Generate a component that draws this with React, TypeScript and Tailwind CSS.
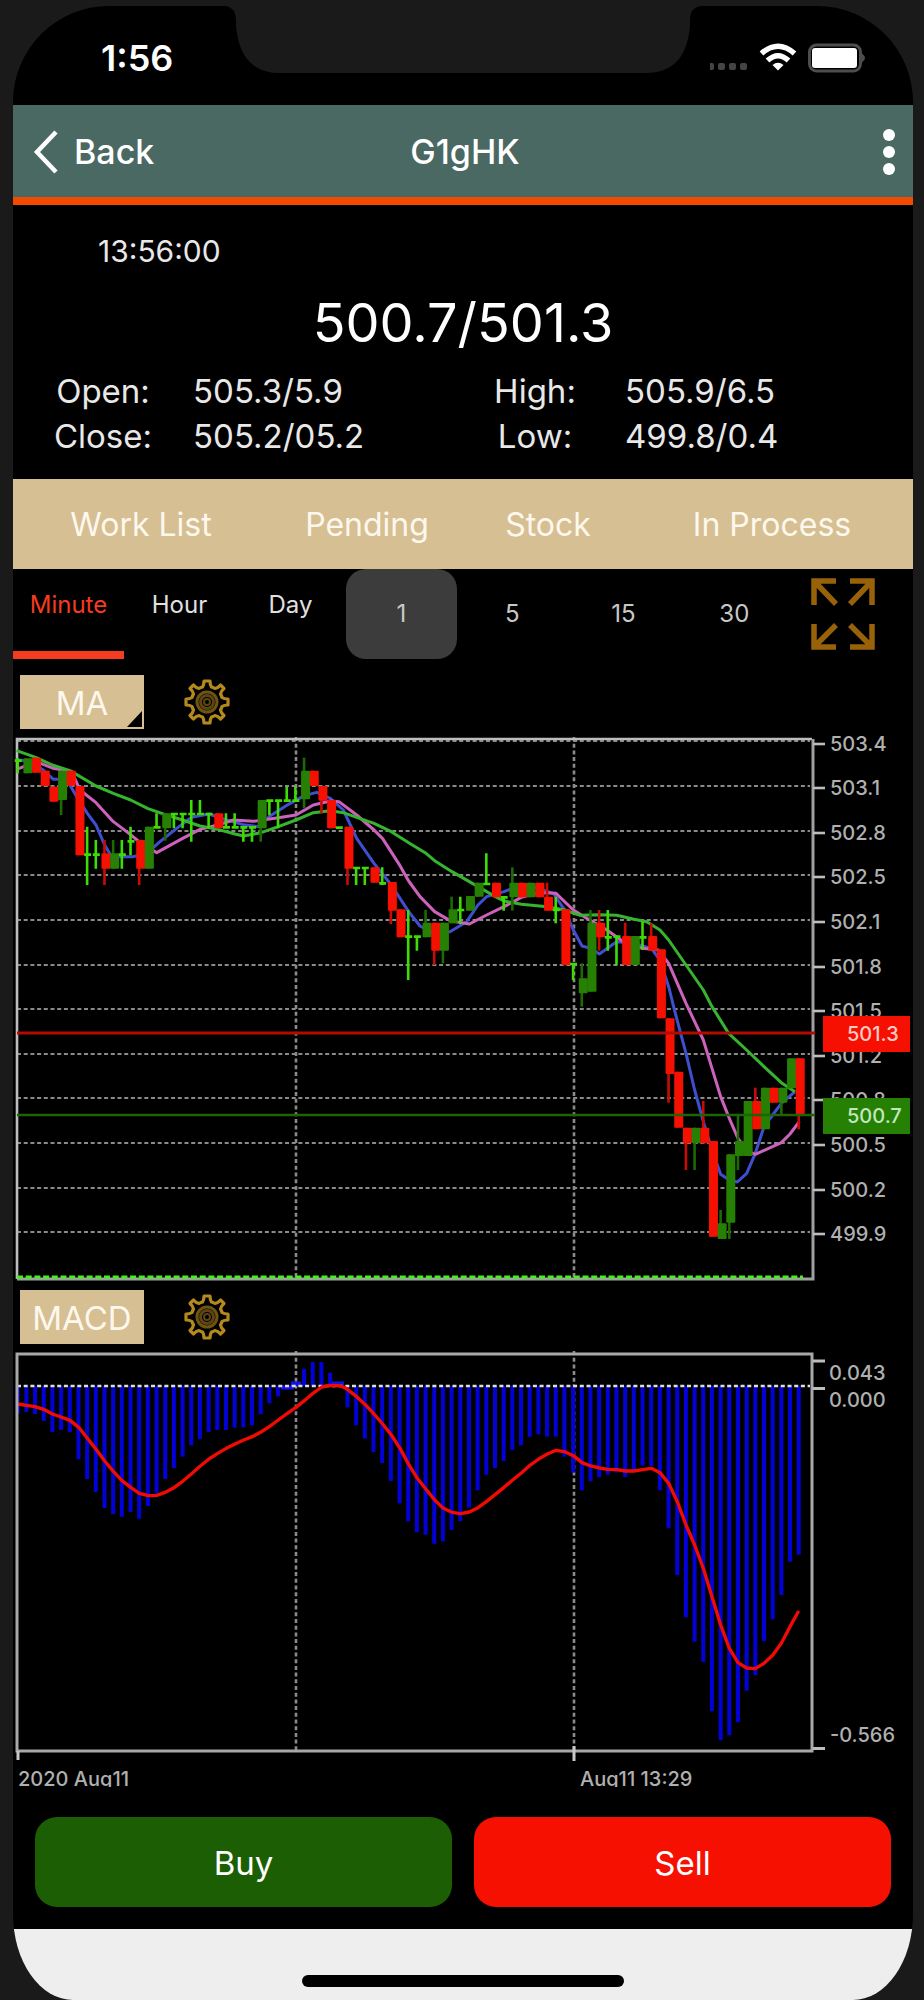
import { useState } from 'react';

type Kind = 'up' | 'down' | 'flat';

interface Candle {
  kind: Kind;
  high: number;
  top: number;
  bottom: number;
  low: number;
}

const up = (high: number, top: number, bottom: number, low = bottom): Candle => ({ kind: 'up', high, top, bottom, low });
const down = (high: number, top: number, bottom: number, low = bottom): Candle => ({ kind: 'down', high, top, bottom, low });
const flat = (high: number, low: number, price: number): Candle => ({ kind: 'flat', high, top: price, bottom: price, low });

// one entry per minute, in thirds of a pixel below the top of the plot
const candles: Candle[] = [
  flat(85, 130, 92), up(85, 85, 130), down(83, 83, 128), down(122, 122, 168), down(170, 170, 215),
  up(122, 122, 210, 255), down(122, 122, 167), down(168, 168, 376), flat(290, 465, 374), flat(330, 416, 374),
  down(330, 370, 416, 465), up(330, 370, 416), flat(330, 416, 374), flat(290, 376, 334), down(330, 330, 416, 465),
  up(290, 290, 416), flat(250, 295, 292), up(250, 250, 295, 332), flat(250, 295, 252), flat(250, 295, 252),
  flat(210, 335, 252), flat(210, 252, 252), flat(250, 295, 252), down(250, 250, 295), flat(250, 295, 292),
  flat(250, 295, 292), flat(290, 335, 292), flat(290, 335, 292), up(210, 210, 295, 335), flat(210, 256, 212),
  flat(210, 295, 212), flat(170, 212, 212), flat(170, 212, 212), up(83, 122, 208, 235), down(122, 122, 168),
  down(168, 168, 212, 250), down(210, 210, 295), flat(290, 296, 293), down(290, 290, 416, 465), flat(412, 465, 414),
  flat(412, 465, 414), down(412, 412, 458), flat(412, 465, 460), down(456, 456, 542, 582), down(538, 538, 622),
  flat(540, 750, 620), flat(620, 662, 620), up(540, 578, 622), down(578, 578, 662, 705), up(578, 578, 662, 700),
  up(500, 538, 580), flat(500, 582, 540), up(498, 498, 542), up(458, 458, 500), flat(370, 462, 462),
  down(458, 458, 502), flat(500, 542, 502), up(412, 458, 502, 542), down(458, 458, 502), up(458, 458, 502),
  down(458, 458, 502), down(458, 500, 542), flat(500, 580, 540), down(538, 538, 705), flat(700, 750, 702),
  up(700, 745, 790, 830), up(540, 578, 785), down(540, 578, 622, 662), flat(540, 662, 622), flat(620, 705, 620),
  down(578, 618, 705), up(618, 618, 705), flat(575, 660, 622), down(580, 618, 662), down(658, 658, 865),
  down(865, 865, 1032, 1118), down(1025, 1025, 1193), down(1193, 1193, 1240, 1320), up(1193, 1193, 1240, 1320), down(1113, 1193, 1240),
  down(1233, 1233, 1520), up(1440, 1480, 1527), up(1273, 1273, 1478, 1527), up(1155, 1233, 1278, 1320), up(1113, 1113, 1278),
  down(1073, 1113, 1198), up(1073, 1073, 1198), down(1073, 1073, 1118), up(1073, 1073, 1118, 1155), up(985, 985, 1075),
  down(985, 985, 1153, 1198),
];

// moving averages
const ma5 =
  '50,90 85,92 130,120 160,148 200,148 230,200 262,250 288,285 314,345 335,380 400,380 440,370 480,335 530,295 574,262 627,252 680,270 730,284 775,290 810,258 862,225 913,197 950,187 991,205 1030,240 1070,325 1122,400 1174,465 1226,545 1260,588 1304,610 1350,605 1400,575 1434,525 1460,500 1512,485 1538,475 1600,470 1660,490 1694,540 1720,600 1746,648 1772,655 1798,672 1850,635 1902,640 1954,655 1980,690 2006,770 2026,850 2058,970 2084,1080 2110,1175 2136,1260 2162,1333 2188,1350 2212,1356 2240,1330 2266,1270 2292,1190 2318,1155 2344,1120 2385,1085';
const ma10 =
  '50,118 109,95 160,115 215,125 240,180 288,218 340,275 380,305 430,345 470,368 548,325 600,298 653,285 700,270 760,274 835,263 888,255 940,225 991,213 1017,215 1070,255 1122,300 1148,326 1200,407 1226,453 1260,500 1304,545 1350,572 1408,582 1460,555 1512,530 1564,502 1616,488 1668,490 1720,540 1772,572 1824,602 1876,640 1928,655 1975,660 2006,700 2058,820 2110,930 2136,1015 2162,1100 2188,1165 2214,1225 2240,1262 2266,1273 2344,1238 2370,1212 2398,1175';
const ma20 =
  '50,62 109,83 157,105 210,122 288,168 340,190 392,210 444,236 496,254 548,270 600,288 653,298 705,312 731,318 783,308 835,290 888,270 940,248 991,242 1030,248 1070,262 1122,280 1174,305 1226,338 1278,370 1304,392 1356,425 1408,455 1460,485 1486,500 1512,513 1564,523 1642,530 1694,540 1740,556 1798,554 1850,556 1902,568 1940,575 1980,600 2006,630 2058,705 2110,780 2136,830 2186,910 2240,960 2292,1010 2344,1058 2385,1085';

const priceTicks = [
  { y: 744, label: '503.4' },
  { y: 788, label: '503.1' },
  { y: 833, label: '502.8' },
  { y: 877, label: '502.5' },
  { y: 922, label: '502.1' },
  { y: 967, label: '501.8' },
  { y: 1011, label: '501.5' },
  { y: 1056, label: '501.2' },
  { y: 1100, label: '500.8' },
  { y: 1145, label: '500.5' },
  { y: 1190, label: '500.2' },
  { y: 1234, label: '499.9' },
];

const histogram = [
  460, 456, 462, 483, 516, 510, 516, 598, 657, 696, 744, 763, 770, 756, 776, 738, 700, 657, 624, 590,
  556, 537, 516, 510, 510, 503, 502, 496, 463, 430, 409, 388, 366, 326, 306, 306, 338, 366, 442, 496,
  536, 576, 609, 663, 730, 784, 817, 824, 851, 844, 810, 783, 743, 691, 644, 624, 603, 570, 556, 530,
  523, 530, 530, 590, 638, 691, 664, 652, 644, 637, 651, 631, 617, 618, 691, 805, 945, 1072, 1145, 1206,
  1354, 1441, 1426, 1387, 1292, 1245, 1144, 1078, 1005, 905, 884,
];

const signal =
  '52,432 80,436 105,440 131,448 157,462 183,471 210,481 236,502 262,535 288,568 314,603 340,634 366,662 392,682 418,700 444,707 470,706 496,697 522,683 548,664 574,642 600,619 627,597 653,580 679,565 705,552 731,540 757,530 783,516 809,499 835,480 862,460 888,442 913,422 939,400 965,381 991,376 1017,377 1035,383 1070,410 1096,434 1122,462 1148,492 1174,525 1200,565 1226,613 1252,655 1278,688 1304,720 1330,745 1356,757 1382,761 1408,756 1434,743 1460,724 1486,703 1512,682 1538,660 1564,639 1590,616 1616,597 1642,582 1668,571 1694,575 1720,587 1746,608 1772,618 1798,624 1824,628 1850,629 1876,633 1902,633 1928,629 1954,625 1980,638 2006,670 2032,725 2058,795 2084,855 2110,925 2136,1010 2162,1095 2188,1165 2214,1208 2240,1224 2266,1226 2292,1210 2318,1186 2344,1150 2370,1100 2396,1053';

const candleX = (i: number) => 17.7 + i * 8.678;

function CandleMark({ candle, index }: { candle: Candle; index: number }) {
  const x = candleX(index);
  const y = (v: number) => 730 + v / 3;
  if (candle.kind === 'flat') {
    return (
      <path
        d={`M${x} ${y(candle.high)}V${y(candle.low)}M${x - 3} ${y(candle.top)}H${x + 4}`}
        stroke="#3ddc05"
        strokeWidth="2.6"
      />
    );
  }
  const color = candle.kind === 'up' ? '#268003' : '#f61002';
  const wick = candle.kind === 'up' ? '#1c6a03' : '#c80c04';
  return (
    <g>
      <path d={`M${x} ${y(candle.high)}V${y(candle.low)}`} stroke={wick} strokeWidth="2.6" />
      <rect x={x - 3} y={y(candle.top)} width="9" height={(candle.bottom - candle.top) / 3} rx="1" fill={color} />
    </g>
  );
}

function PriceChart() {
  return (
    <svg viewBox="13 735 900 545" className="block w-full overflow-visible" role="img" aria-label="Price chart">
      <g stroke="#8a8a8a" strokeWidth="2" strokeDasharray="4 2.7" fill="none">
        {[741, 786, 831, 875, 920, 965, 1009, 1054, 1098, 1143, 1188, 1232].map((y) => (
          <path key={y} d={`M17 ${y}H810`} />
        ))}
        <path d="M296 737V1280M574 737V1280" strokeWidth="2.6" />
      </g>
      <path d="M17 1279V739H812" stroke="#bdbdbd" strokeWidth="2.6" fill="none" />
      <path d="M17 1279H813V739" stroke="#a0a0a0" strokeWidth="3" fill="none" />
      <g fill="none" strokeWidth="9" strokeLinejoin="round" transform="translate(0 730) scale(.33333)">
        <polyline points={ma5} stroke="#3e4fd0" />
        <polyline points={ma10} stroke="#cd62bd" />
        <polyline points={ma20} stroke="#37b42f" />
      </g>
      {candles.map((candle, i) => (
        <CandleMark key={i} candle={candle} index={i} />
      ))}
      <path d="M17 1277H803" stroke="#3ff41a" strokeWidth="3" strokeDasharray="6 2.7" />
      <path d="M17 1033H815" stroke="#b00c04" strokeWidth="3" />
      <path d="M17 1115H815" stroke="#1c6503" strokeWidth="2.6" />
      <g fontSize="20" fontWeight="500" fill="#b0b0b0">
        {priceTicks.map((tick) => (
          <g key={tick.label}>
            <path d={`M813 ${tick.y}H825`} stroke="#bdbdbd" strokeWidth="2.6" />
            <text x="830" y={tick.y + 7}>{tick.label}</text>
          </g>
        ))}
      </g>
      <g fontSize="20" fontWeight="500">
        <rect x="823" y="1016" width="87" height="36" fill="#f61002" />
        <text x="847" y="1041" fill="#ffc9c4">501.3</text>
        <rect x="823" y="1098" width="87" height="36" fill="#268003" />
        <text x="847" y="1123" fill="#c4e6bf">500.7</text>
      </g>
    </svg>
  );
}

function MacdChart() {
  return (
    <svg viewBox="13 1350 900 447" className="block w-full overflow-visible" role="img" aria-label="MACD chart">
      <defs>
        <clipPath id="time-axis">
          <rect x="13" y="1766" width="900" height="21" />
        </clipPath>
      </defs>
      <path d="M296 1351V1750M574 1351V1750" stroke="#8a8a8a" strokeWidth="2.6" strokeDasharray="4 2.7" />
      <g stroke="#0202d6" strokeWidth="4">
        {histogram.map((v, i) => (
          <path key={i} d={`M${candleX(i)} 1386V${1260 + v / 3}`} />
        ))}
      </g>
      <path d="M281 1387.5H294M291 1383.5H301M332 1383.5H344" stroke="#1212f0" strokeWidth="4" />
      <path d="M17 1386H810" stroke="#dedede" strokeWidth="2.6" strokeDasharray="4 2.7" />
      <polyline points={signal} fill="none" stroke="#f20a05" strokeWidth="10" strokeLinejoin="round" transform="translate(0 1260) scale(.33333)" />
      <path d="M17 1354H812V1751H17Z" stroke="#a8a8a8" strokeWidth="3" fill="none" />
      <path d="M813 1361H825M813 1388.5H825M813 1748.5H825" stroke="#bdbdbd" strokeWidth="3" />
      <path d="M18 1751V1760M574 1746V1761" stroke="#c8c8c8" strokeWidth="3" />
      <g fontSize="20" fontWeight="500" fill="#b0b0b0">
        <text x="829" y="1380">0.043</text>
        <text x="829" y="1407">0.000</text>
        <text x="830" y="1742">-0.566</text>
      </g>
      <g fontSize="20" fontWeight="500" fill="#b0b0b0" clipPath="url(#time-axis)">
        <text x="18" y="1786">2020 Aug11</text>
        <text x="580" y="1786">Aug11 13:29</text>
      </g>
    </svg>
  );
}

function GearIcon() {
  return (
    <svg viewBox="0 0 46 46" className="h-[46px] w-[46px]" fill="none" stroke="#b48a1e">
      <path
        d="M18.5 8Q20 6 20 2H26Q26 6 27.500 8Q29.500 8.500 31 9.500Q34 9 36.500 6L40 9.500Q37 12 36.500 15Q37.500 16.500 38 18.500Q40 20 44 20V26Q40 26 38 27.500Q37.500 29.500 36.500 31Q37 34 40 36.500L36.500 40Q34 37 31 36.500Q29.500 37.500 27.500 38Q26 40 26 44H20Q20 40 18.500 38Q16.500 37.500 15 36.500Q12 37 9.500 40L6 36.500Q9 34 9.500 31Q8.500 29.500 8 27.500Q6 26 2 26V20Q6 20 8 18.500Q8.500 16.500 9.500 15Q9 12 6 9.500L9.500 6Q12 9 15 9.500Q16.500 8.500 18.500 8Z"
        strokeWidth="3.2"
        strokeLinejoin="round"
      />
      <circle cx="23" cy="23" r="10" stroke="#6e5312" strokeWidth="3" />
      <circle cx="23" cy="23" r="6.5" stroke="#5c4510" strokeWidth="3" />
      <circle cx="23" cy="23" r="3" stroke="#5c4510" strokeWidth="2" />
    </svg>
  );
}

function StatusBar() {
  return (
    <div className="relative flex h-[99px] items-center justify-between pr-[46px] pl-[88px]">
      <svg viewBox="0 0 474 67" className="absolute top-0 left-1/2 h-[67px] w-[474px] -translate-x-1/2" fill="#1a1a1a">
        <path d="M0 -1H474V0Q464 2 464 14V20Q460 67 420 67H54Q14 67 10 20V14Q10 2 0 0Z" />
      </svg>
      <span className="pt-1 text-[36px] leading-10 font-semibold">1:56</span>
      <svg viewBox="0 0 157 30" className="mt-1 h-[30px] w-[157px]" fill="none">
        <g fill="#444444">
          <rect x="-3" y="20" width="7" height="7" rx="2" />
          <rect x="8" y="20" width="7" height="7" rx="2" />
          <rect x="19" y="20" width="7" height="7" rx="2" />
          <rect x="30" y="20" width="7" height="7" rx="2" />
        </g>
        <g stroke="#ffffff" strokeWidth="5.5">
          <path d="M51.500 10.500Q68 -4 84.500 10.500" />
          <path d="M57.500 17.500Q68 8 78.500 17.500" />
        </g>
        <path d="M62.500 22Q68 17.500 73.500 22L68 27.500Z" fill="#ffffff" />
        <rect x="99.500" y="2" width="51" height="26" rx="7" stroke="#4d4d4d" strokeWidth="3" />
        <rect x="102" y="5" width="45" height="20" rx="3" fill="#ffffff" />
        <path d="M152 10.500Q158 15 152 19.500Z" fill="#4d4d4d" />
      </svg>
    </div>
  );
}

function Header() {
  return (
    <header className="grid h-[100px] grid-cols-3 items-center border-b-8 border-[#f24a00] bg-[#4a6963] pt-0.5 pr-4 pl-5 text-[34px] leading-10 font-medium">
      <button type="button" className="flex items-center gap-4">
        <svg viewBox="0 0 25 44" className="h-[44px] w-[25px]" fill="none" stroke="#ffffff" strokeWidth="4.5">
          <path d="M23 2L4 22L23 42" />
        </svg>
        Back
      </button>
      <h1 className="text-center">G1gHK</h1>
      <button type="button" aria-label="More" className="justify-self-end">
        <svg viewBox="0 0 16 48" className="h-[48px] w-[16px]" fill="#ffffff">
          <circle cx="8" cy="7" r="6" />
          <circle cx="8" cy="24" r="6" />
          <circle cx="8" cy="41" r="6" />
        </svg>
      </button>
    </header>
  );
}

function Quote() {
  return (
    <section className="h-[274px] pt-[26px] text-[#e8e8e8]">
      <p className="pl-[85px] text-[30px] leading-10">13:56:00</p>
      <p className="pt-5 text-center text-[54px] leading-[64px] text-white">500.7/501.3</p>
      <dl className="grid grid-cols-[20%_28%_20%_32%] pt-[14px] text-[33px] leading-[45px]">
        <dt className="text-center">Open:</dt>
        <dd>505.3/5.9</dd>
        <dt className="text-center">High:</dt>
        <dd>505.9/6.5</dd>
        <dt className="text-center">Close:</dt>
        <dd>505.2/05.2</dd>
        <dt className="text-center">Low:</dt>
        <dd>499.8/0.4</dd>
      </dl>
    </section>
  );
}

function ExpandIcon() {
  return (
    <svg viewBox="0 0 64 72" className="h-[72px] w-[64px]" fill="none" stroke="#986209" strokeWidth="5.5">
      <path d="M3 27V3H25M4 4L25 26" />
      <path d="M39 3H61V27M60 4L39 26" />
      <path d="M3 46V69H25M4 68L25 47" />
      <path d="M61 46V69H39M60 68L39 47" />
    </svg>
  );
}

const units = ['Minute', 'Hour', 'Day'];
const periods = ['1', '5', '15', '30'];

function PeriodBar() {
  const [unit, setUnit] = useState('Minute');
  const [period, setPeriod] = useState('1');

  return (
    <div className="flex h-[90px] text-[24px] leading-7">
      {units.map((item) => (
        <button
          key={item}
          type="button"
          onClick={() => setUnit(item)}
          className={`flex w-[12.33%] flex-col items-center border-b-8 pt-[22px] ${
            unit === item ? 'border-[#f53b20] text-[#f53b20]' : 'border-transparent text-[#e0e0e0]'
          }`}
        >
          {item}
        </button>
      ))}
      {periods.map((item) => (
        <button
          key={item}
          type="button"
          onClick={() => setPeriod(item)}
          className={`w-[12.33%] rounded-[20px] text-[#c8c8c8] ${period === item ? 'bg-[#3c3c3c]' : ''}`}
        >
          {item}
        </button>
      ))}
      <button type="button" aria-label="Full screen" className="flex flex-1 items-center justify-center pr-4">
        <ExpandIcon />
      </button>
    </div>
  );
}

function Indicator({ name, menu }: { name: string; menu?: boolean }) {
  return (
    <div className="flex items-center gap-[40px] pb-[6px] pl-[7px]">
      <button type="button" className="relative h-[54px] w-[124px] bg-[#d6bf92] pt-0.5 text-[33px] leading-10 text-[#fdf8ee]">
        {name}
        {menu && (
          <svg viewBox="0 0 15 16" className="absolute right-[2px] bottom-[2px] h-[16px] w-[15px]" fill="#000000">
            <path d="M15 0V16H0Z" />
          </svg>
        )}
      </button>
      <button type="button" aria-label={`${name} settings`}>
        <GearIcon />
      </button>
    </div>
  );
}

export default function App() {
  return (
    <div className="bg-[#1a1a1a] pt-[6px] pr-[11px] pl-[13px] font-['Inter',sans-serif] text-white">
      <div className="overflow-hidden rounded-t-[96px] rounded-b-[60px_86px] bg-black">
        <StatusBar />
        <Header />
        <Quote />
        <nav className="grid h-[90px] grid-cols-[256fr_196fr_166fr_282fr] bg-[#d6bf92] pt-0.5 text-[32px] leading-10 text-[#fdf8ee]">
          <button type="button">Work List</button>
          <button type="button">Pending</button>
          <button type="button">Stock</button>
          <button type="button">In Process</button>
        </nav>
        <PeriodBar />
        <div className="pt-4">
          <Indicator name="MA" menu />
        </div>
        <PriceChart />
        <div className="pt-[10px]">
          <Indicator name="MACD" />
        </div>
        <MacdChart />
        <div className="grid grid-cols-2 gap-[22px] px-[22px] pt-5 pb-[22px] text-[33px] leading-10">
          <button type="button" className="h-[90px] rounded-[22px] bg-[#1c5e03] pt-0.5">Buy</button>
          <button type="button" className="h-[90px] rounded-[22px] bg-[#f61002] pt-0.5">Sell</button>
        </div>
        <footer className="flex h-[71px] items-end justify-center bg-[#eeeeee] pb-[13px]">
          <div className="h-3 w-[322px] rounded-full bg-black" />
        </footer>
      </div>
    </div>
  );
}
